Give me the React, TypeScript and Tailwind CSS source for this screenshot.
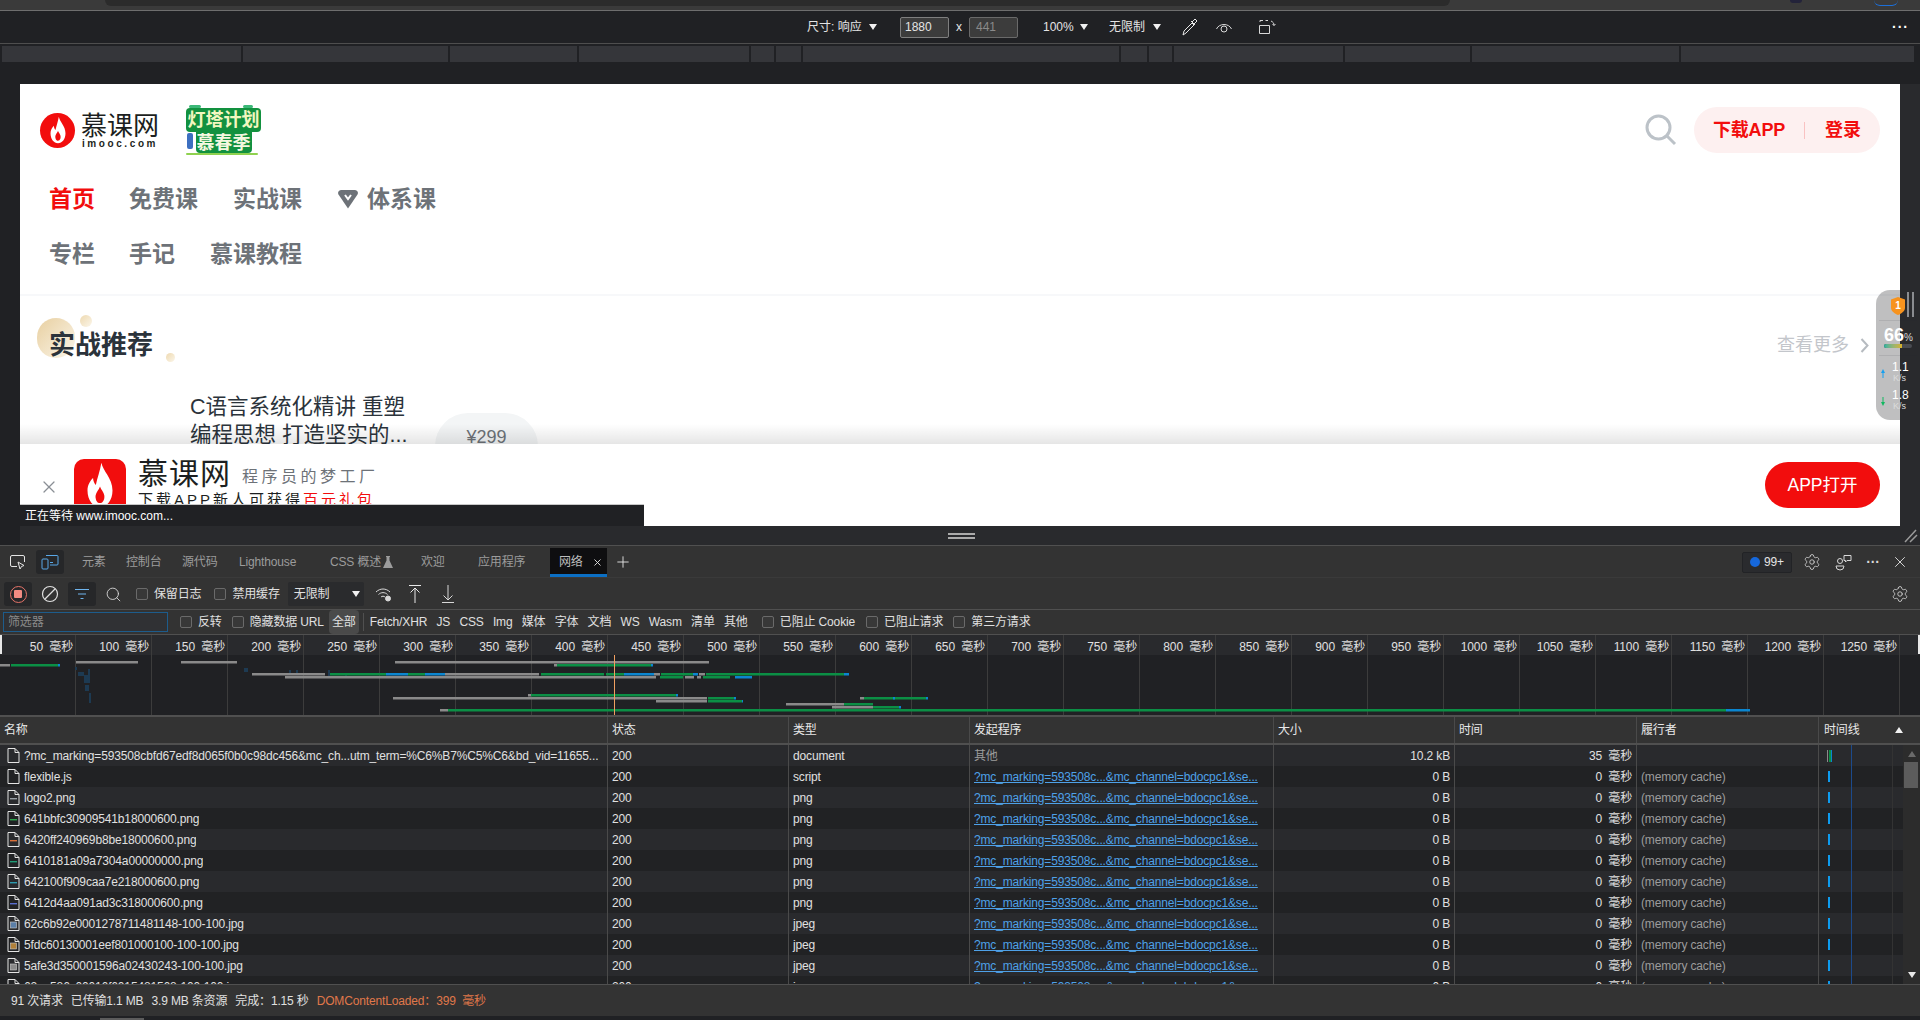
import { Plus, Search, Settings, X } from 'lucide-react';

const ticks = Array.from({ length: 25 }, (_, i) => (i + 1) * 50);

const GRAY = '#8a8a8a';
const GREEN = '#0b8f45';
const BLUE = '#0b86d0';

// y, x1, x2, colour
const bars: [number, number, number, string][] = [
    [9, 0, 10, GRAY], [9, 11, 58, GREEN], [9, 58, 60, BLUE],
    [6, 76, 138, GRAY], [6, 181, 237, GRAY], [6, 395, 709, GRAY],
    [9, 554, 557, GRAY], [9, 557, 651, GREEN], [9, 651, 653, BLUE],
    [18, 252, 325, GRAY], [18, 330, 386, GREEN], [18, 386, 408, BLUE], [18, 408, 425, GREEN],
    [18, 425, 445, BLUE], [18, 445, 539, GRAY], [18, 541, 604, GREEN], [18, 606, 624, GREEN],
    [18, 624, 654, BLUE], [18, 654, 660, GRAY], [18, 661, 693, GREEN], [18, 693, 698, BLUE],
    [18, 699, 705, GRAY], [18, 706, 844, GREEN], [18, 844, 849, BLUE],
    [21, 285, 656, GRAY], [21, 660, 683, GREEN], [21, 685, 694, GRAY], [21, 697, 701, GRAY],
    [21, 703, 730, GREEN], [21, 735, 752, BLUE],
    [39, 528, 531, GRAY], [39, 531, 676, GREEN], [39, 676, 678, BLUE],
    [42, 393, 707, GRAY], [42, 708, 734, GREEN], [42, 734, 736, BLUE],
    [42, 860, 864, GRAY], [42, 864, 926, GREEN], [42, 893, 895, BLUE], [42, 926, 928, BLUE],
    [45, 656, 707, GRAY], [45, 708, 742, GREEN], [45, 742, 743, BLUE],
    [48, 786, 844, GRAY], [48, 844, 873, GREEN],
    [51, 832, 873, GRAY], [51, 873, 899, GREEN], [51, 899, 901, BLUE],
    [54, 440, 448, GRAY], [54, 448, 1726, GREEN], [54, 1726, 1750, BLUE],
];

const specks: [number, number, number, number][] = [
    [75, 12, 2, 3], [78, 17, 6, 4], [84, 20, 4, 8], [88, 14, 2, 14], [85, 30, 4, 6], [89, 38, 2, 10],
    [244, 13, 4, 4], [289, 15, 2, 3], [296, 15, 2, 3], [328, 15, 2, 8], [345, 19, 2, 3],
];

type Row = { name: string; type: string; dash?: string; thumb?: string };

const rows: Row[] = [
    { name: '?mc_marking=593508cbfd67edf8d065f0b0c98dc456&mc_ch...utm_term=%C6%B7%C5%C6&bd_vid=11655...', type: 'document' },
    { name: 'flexible.js', type: 'script' },
    { name: 'logo2.png', type: 'png', dash: '#9aa0a6' },
    { name: '641bbfc30909541b18000600.png', type: 'png', dash: '#2fa84f' },
    { name: '6420ff240969b8be18000600.png', type: 'png', dash: '#d9703a' },
    { name: '6410181a09a7304a00000000.png', type: 'png', dash: '#1f9c76' },
    { name: '642100f909caa7e218000600.png', type: 'png', dash: '#2f9cb0' },
    { name: '6412d4aa091ad3c318000600.png', type: 'png', dash: '#5a6fd0' },
    { name: '62c6b92e0001278711481148-100-100.jpg', type: 'jpeg', thumb: '#5b7fa8' },
    { name: '5fdc60130001eef801000100-100-100.jpg', type: 'jpeg', thumb: '#b0803a' },
    { name: '5afe3d350001596a02430243-100-100.jpg', type: 'jpeg', thumb: '#8a8a8a' },
    { name: '62ae586c00016f6015481568-100-100.jpg', type: 'jpeg', thumb: '#7a8a9a' },
];

const Triangle = () => (
    <svg width="10" height="8" viewBox="0 0 10 8" className="shrink-0">
        <path d="M1 1h8L5 7z" fill="#f1f1f1" />
    </svg>
);

const Check = ({ label, className }: { label: string; className?: string }) => (
    <span className={`flex items-center gap-[6px] ${className ?? ''}`}>
        <span className="h-[12px] w-[12px] rounded-[2px] border border-[#6a6a6a] bg-[#383838]" />
        <span>{label}</span>
    </span>
);

const FileIcon = ({ dash, thumb }: { dash?: string; thumb?: string }) => (
    <svg width="13" height="17" viewBox="0 0 13 17" className="shrink-0">
        <path d="M1 1.500h7l4 4v10H1z" fill="none" stroke="#e4e4e4" strokeWidth="1" />
        <path d="M8 1.500v4h4" fill="none" stroke="#e4e4e4" strokeWidth="1" />
        {dash && <rect x="3" y="9" width="7" height="1.400" fill={dash} />}
        {thumb && <rect x="3.500" y="7" width="6" height="6" fill={thumb} stroke="#cfcfcf" strokeWidth="0.6" />}
    </svg>
);

const Flame = ({ size }: { size: number }) => (
    <svg width={size} height={size} viewBox="0 0 36 36">
        <path
            d="M19 2C20 8 27 13 27 22C27 29 23 34 18 34C13 34 9 29 9 22C9 18 11 15 13 13C13 15 14 17 15 18C16 13 18 8 19 2zM18 19C17 22 14 24 15 28C15.500 30.500 17 31 18 31C19 31 20.500 30 21 28C22 24 19 22 18 19z"
            fill="#fff"
            fillRule="evenodd"
        />
    </svg>
);

function TopChrome() {
    return (
        <>
            <div className="flex h-[10px] shrink-0 bg-[#3a3a3a]">
                <div className="ml-[105px] h-[6px] w-[1345px] rounded-b-[8px] bg-[#2b2b2b]" />
                <div className="ml-[340px] h-[3px] w-[12px] rounded-b-full bg-[#23233a]" />
                <div className="ml-[72px] h-[6px] w-[24px] rounded-b-[8px] border-b border-[#1c6fd8]" />
            </div>
            <div className="h-px shrink-0 bg-[#6e6e6e]" />
            <div className="flex h-[32px] shrink-0 items-center bg-[#202124] pl-[807px] text-[#e4e4e4]">
                <span className="w-[61px]">尺寸: 响应</span>
                <Triangle />
                <span className="ml-[22px] flex h-[21px] w-[49px] items-center rounded-[2px] border border-[#7f7f7f] bg-[#3c3c3c] pl-[4px]">1880</span>
                <span className="mx-[6px] w-[8px] text-center">x</span>
                <span className="flex h-[21px] w-[49px] items-center rounded-[2px] border border-[#6a6a6a] bg-[#3c3c3c] pl-[6px] text-[#8a8a8a]">441</span>
                <span className="ml-[25px] w-[36px]">100%</span>
                <Triangle />
                <span className="ml-[20px] w-[43px]">无限制</span>
                <Triangle />
                <svg width="18" height="20" viewBox="0 0 18 20" className="ml-[19px]" fill="none" stroke="#e8e8e8">
                    <path d="M2 18l1-4 8-8 2 2-8 8zM10 4l4 4M11 5l3-3 2 2-3 3" />
                </svg>
                <svg width="18" height="14" viewBox="0 0 18 14" className="ml-[16px]" fill="none" stroke="#d8d8d8">
                    <path d="M1.500 9C4 3 14 3 16.500 9" />
                    <circle cx="9" cy="9" r="3" />
                </svg>
                <svg width="18" height="16" viewBox="0 0 18 16" className="ml-[25px]" fill="none" stroke="#d8d8d8">
                    <path d="M1.500 6.500h10v8h-10zM2 3V1.500h3M7.500 1.500H10M13 2c2 1 3 2 3 4.500M14.500 5l1.500 1.500L17.500 5" />
                </svg>
                <span className="ml-[616px] text-[14px] font-bold leading-none tracking-[1px] text-white">···</span>
            </div>
            <div className="h-px shrink-0 bg-[#4e4e4e]" />
            <div className="h-[2px] shrink-0 bg-[#202124]" />
            <div className="flex h-[16px] shrink-0 bg-[#202124] px-[2px]">
                {[239, 205, 127, 170, 23, 25, 316, 26, 23, 169, 125, 207, 233].map((w, i) => (
                    <div key={i} className="mr-[2px] bg-[#35363a]" style={{ width: w }} />
                ))}
            </div>
        </>
    );
}

function WebPage() {
    const navText = 'text-[23px] font-bold leading-[46px] text-[#6d7278]';
    return (
        <div className="relative h-[442px] w-[1880px] overflow-hidden bg-white">
            <div className="flex h-[92px] items-center pl-[20px] pr-[20px]">
                <div className="flex h-[35px] w-[35px] items-center justify-center rounded-full bg-[#f20d0d]">
                    <Flame size={30} />
                </div>
                <div className="ml-[5px] flex w-[80px] flex-col items-center pt-[2px]">
                    <span className="text-[26px] leading-[26px] text-[#1c1f21]">慕课网</span>
                    <span className="text-[10px] font-bold leading-[10px] tracking-[2.600px] text-[#1c1f21]">imooc.com</span>
                </div>
                {/* campaign badge: two stepped green plates */}
                <div className="relative ml-[26px] flex h-[50px] w-[75px] flex-col items-center font-bold">
                    <span className="absolute left-[3px] top-0 h-[3px] w-[12px] rounded-full bg-[#3cb878]" />
                    <span className="absolute right-[8px] top-0 h-[3px] w-[10px] rounded-full bg-[#3cb878]" />
                    <div className="mt-[3px] flex h-[24px] w-[75px] items-center justify-center rounded-[4px] bg-[#12913f] text-[18px] leading-none text-[#f2f7c0]">
                        <span className="whitespace-nowrap">灯塔计划</span>
                    </div>
                    <div className="flex h-[21px] w-[56px] items-center justify-center rounded-b-[4px] bg-[#12913f] text-[18px] leading-none text-[#f4f8e0]">
                        <span className="whitespace-nowrap">慕春季</span>
                    </div>
                    <span className="absolute bottom-[6px] left-[1px] h-[16px] w-[6px] rounded-[2px] bg-[#3c6fc0]" />
                    <span className="absolute bottom-0 left-0 h-[2px] w-[72px] rounded-full bg-[#8fd14f]" />
                </div>
                <svg width="32" height="32" viewBox="0 0 32 32" fill="none" stroke="#bcc2c8" strokeWidth="3" className="ml-auto">
                    <circle cx="13.500" cy="13.500" r="11.500" />
                    <path d="M22 22l8 8" />
                </svg>
                <div className="ml-[17px] flex h-[46px] w-[186px] items-center rounded-full bg-[#fdf0f0] pl-[19px] text-[18px] font-bold text-[#f20d0d]">
                    <span className="w-[71px] whitespace-nowrap pt-[1px] tracking-[-0.2px]">下载APP</span>
                    <span className="ml-[20px] h-[17px] w-px bg-[#f9c2c2]" />
                    <span className="ml-[20px] pt-[1px]">登录</span>
                </div>
            </div>
            <div className="flex pl-[29px]">
                <span className="w-[80px] text-[23px] font-bold leading-[46px] text-[#f20d0d]">首页</span>
                <span className={`w-[104px] ${navText}`}>免费课</span>
                <span className={`w-[105px] ${navText}`}>实战课</span>
                <span className={`flex items-center gap-[9px] ${navText}`}>
                    <svg width="20" height="20" viewBox="0 0 20 20">
                        <path d="M3 1h14a3 3 0 0 1 2.500 4.500L10 19.500 .5 5.500A3 3 0 0 1 3 1z" fill="#6d7278" />
                        <path d="M7 6l3 4 3-4" fill="none" stroke="#fff" strokeWidth="2" />
                    </svg>
                    体系课
                </span>
            </div>
            <div className="mt-[9px] flex pl-[29px]">
                <span className={`w-[80px] ${navText}`}>专栏</span>
                <span className={`w-[81px] ${navText}`}>手记</span>
                <span className={navText}>慕课教程</span>
            </div>
            <div className="mt-[17px] h-[2px] bg-[#f7f8fa]" />
            <div className="relative mt-[19px] flex h-[60px] items-center pl-[29px] pr-[30px]">
                <span className="absolute left-[17px] top-[3px] h-[40px] w-[38px] rounded-full bg-gradient-to-br from-[#e8cfa0] to-[#fbf6ea]" />
                <span className="absolute left-[60px] top-0 h-[12px] w-[12px] rounded-full bg-gradient-to-br from-[#eed9b0] to-[#fbf6ea]" />
                <span className="absolute left-[146px] top-[38px] h-[9px] w-[9px] rounded-full bg-gradient-to-br from-[#eed9b0] to-[#fbf6ea]" />
                <span className="relative text-[26px] font-bold text-[#2b333b]">实战推荐</span>
                <span className="ml-auto text-[18px] text-[#c3c6cb]">查看更多</span>
                <svg width="10" height="15" viewBox="0 0 10 15" fill="none" stroke="#b6bbc0" strokeWidth="2" className="ml-[11px]">
                    <path d="M1.500 1l6 6.500-6 6.500" />
                </svg>
            </div>
            <div className="mt-[18px] flex pl-[170px]">
                <div className="w-[225px] text-[21.500px] leading-[28px] text-[#2b333b]">
                    <div className="whitespace-nowrap">C语言系统化精讲 重塑</div>
                    <div className="whitespace-nowrap">编程思想 打造坚实的...</div>
                </div>
                <div className="ml-[20px] mt-[20px] flex h-[67px] w-[103px] justify-center rounded-[33px] bg-[#f3f5f6] pt-[11px] text-[18px] leading-[26px] text-[#6d7278]">¥299</div>
            </div>
            {/* app download banner pinned to the bottom of the viewport */}
            <div className="absolute inset-x-0 bottom-0 h-[82px] bg-white pl-[54px] pt-[15px]">
                <div className="absolute inset-x-0 -top-[20px] h-[20px] bg-gradient-to-b from-black/0 to-black/10" />
                <div className="flex">
                    <X size={20} strokeWidth={1.5} className="absolute left-[19px] top-[33px] text-[#8a8f95]" />
                    <div className="flex h-[60px] w-[52px] shrink-0 items-start justify-center rounded-[10px] bg-[#f20d0d] pt-[1px]">
                        <Flame size={50} />
                    </div>
                    <div className="ml-[12px]">
                        <div className="flex items-end">
                            <span className="text-[30px] leading-[30px] tracking-[1px] text-[#1c1f21]">慕课网</span>
                            <span className="ml-[11px] text-[16px] leading-[24px] tracking-[3.500px] text-[#6d7278]">程序员的梦工厂</span>
                        </div>
                        <div className="mt-[1px] whitespace-nowrap text-[15px] leading-[20px] tracking-[3px] text-[#1c1f21]">
                            下载APP新人可获得<span className="text-[#f20d0d]">百元礼包</span>
                        </div>
                    </div>
                    <div className="absolute right-[20px] top-[18px] flex h-[46px] w-[115px] items-center justify-center rounded-full bg-[#f20d0d] text-[17.500px] text-white">APP打开</div>
                </div>
            </div>
            <div className="absolute bottom-0 left-0 flex h-[22px] w-[624px] items-center border-t border-[#c8c8c8] bg-[#202124] pl-[5px] text-[12px] text-white">
                正在等待 www.imooc.com...
            </div>
        </div>
    );
}

function SpeedWidget() {
    return (
        <div className="absolute right-0 top-[228px] h-[130px] w-[44px] rounded-l-[14px] bg-[#2b2c30]/30 text-white">
            <svg width="14" height="18" viewBox="0 0 14 18" className="absolute left-[15px] top-[7px]">
                <path d="M7 0l7 2.500V11c0 3-3.500 5.500-7 7-3.500-1.500-7-4-7-7V2.500z" fill="#f7931e" />
                <text x="7" y="12" textAnchor="middle" fontSize="10" fontWeight="700" fill="#fff">1</text>
            </svg>
            <span className="absolute left-[31px] top-[2px] h-[25px] w-[2px] bg-[#8a8c90]" />
            <span className="absolute left-[36px] top-[2px] h-[25px] w-[2px] bg-[#8a8c90]" />
            <span className="absolute inset-x-[3px] top-[30px] h-px bg-[#2b2c30]/10" />
            <div className="absolute left-[8px] top-[35px] text-[18px] font-bold leading-[20px]">
                66<span className="text-[10px] font-normal text-[#d8d8d8]">%</span>
            </div>
            <div className="absolute left-[8px] top-[54px] h-[4px] w-[28px] overflow-hidden rounded-full bg-[#4a4c52]">
                <div className="h-full w-[18px] bg-gradient-to-r from-[#20b2a0] to-[#d8b020]" />
            </div>
            <span className="absolute inset-x-[3px] top-[65px] h-px bg-[#2b2c30]/10" />
            <svg width="4" height="9" viewBox="0 0 4 9" className="absolute left-[5px] top-[79px]">
                <path d="M2 0l2 4H2.500v5h-1V4H0z" fill="#16a0f0" />
            </svg>
            <div className="absolute left-[16px] top-[71px] text-[12px] leading-[12px]">1.1</div>
            <div className="absolute left-[17px] top-[83px] text-[9px] leading-[10px] text-[#dcdcdc]">K/s</div>
            <svg width="4" height="9" viewBox="0 0 4 9" className="absolute left-[5px] top-[107px]">
                <path d="M2 9l2-4H2.500V0h-1v5H0z" fill="#12b860" />
            </svg>
            <div className="absolute left-[16px] top-[99px] text-[12px] leading-[12px]">1.8</div>
            <div className="absolute left-[17px] top-[111px] text-[9px] leading-[10px] text-[#dcdcdc]">K/s</div>
        </div>
    );
}

function TabsRow() {
    const tab = 'text-[#9c9c9c] whitespace-nowrap';
    return (
        <div className="flex h-[32px] shrink-0 items-center border-b border-[#3a3a3a] bg-[#333333] pt-[1px]">
            <svg width="18" height="18" viewBox="0 0 18 18" className="ml-[9px]" fill="none" stroke="#e4e4e4">
                <path d="M8 13.500H3A1.500 1.500 0 0 1 1.500 12V4A1.500 1.500 0 0 1 3 2.500h11A1.500 1.500 0 0 1 15.500 4v5" />
                <path d="M9 9l2 7 1.500-2.500 2.500-1z" />
            </svg>
            <span className="ml-[9px] flex h-[24px] w-[28px] items-center justify-center rounded-[3px] bg-[#262729]">
                <svg width="18" height="16" viewBox="0 0 18 16" fill="none" stroke="#59a8e8">
                    <rect x="1" y="5" width="6" height="10" rx="1" />
                    <path d="M5 1.500h11a1 1 0 0 1 1 1V10a1 1 0 0 1-1 1H9M9 8.500h3" />
                </svg>
            </span>
            <span className={`ml-[18px] w-[44px] ${tab}`}>元素</span>
            <span className={`w-[56px] ${tab}`}>控制台</span>
            <span className={`w-[57px] ${tab}`}>源代码</span>
            <span className={`w-[91px] ${tab}`}>Lighthouse</span>
            <span className={`w-[53px] ${tab}`}>CSS 概述</span>
            <svg width="10" height="12" viewBox="0 0 10 12"><path d="M3 0h4v1H6.500v3.500L10 12H0l3.500-7.500V1H3z" fill="#9c9c9c" /></svg>
            <span className={`ml-[28px] w-[57px] ${tab}`}>欢迎</span>
            <span className={`w-[72px] ${tab}`}>应用程序</span>
            <div className="mt-[1px] flex h-[29px] w-[57px] items-center self-start border-b-[3px] border-[#0b6fc4] bg-[#0e0e10] pl-[9px] pt-[2px] text-[#bdbdbd]">
                网络
                <X size={11} strokeWidth={2} className="ml-[9px] text-[#e4e4e4]" />
            </div>
            <Plus size={18} strokeWidth={1.2} className="ml-[7px] text-[#e8e8e8]" />
            <div className="ml-auto flex h-[21px] w-[50px] items-center justify-center gap-[4px] rounded-[2px] border border-[#222326] bg-[#2a2b2e] text-[#e4e4e4]">
                <span className="h-[10px] w-[10px] rounded-full bg-[#1668dc]" />
                99+
            </div>
            <Settings size={18} strokeWidth={1.1} className="ml-[11px] text-[#d8d8d8]" />
            <svg width="17" height="17" viewBox="0 0 17 17" className="ml-[14px]" fill="none" stroke="#d8d8d8">
                <circle cx="5" cy="7" r="2.500" />
                <path d="M1 12h8a4 4 0 0 1-8 0zM9 1.500h7v5h-4l-1.500 1.500V6.500H9z" />
            </svg>
            <span className="ml-[13px] w-[16px] text-center text-[14px] font-bold leading-none text-[#d8d8d8]">···</span>
            <X size={18} strokeWidth={1.2} className="ml-[10px] mr-[11px] text-[#e4e4e4]" />
        </div>
    );
}

function ActionsRow() {
    return (
        <div className="flex h-[32px] shrink-0 items-center border-b border-[#505050] bg-[#333333] pt-[1px] text-[#e0e0e0]">
            <span className="ml-[4px] flex h-[24px] w-[28px] items-center justify-center rounded-[3px] bg-[#262729]">
                <span className="flex h-[17px] w-[17px] items-center justify-center rounded-full border border-[#e57368]">
                    <span className="h-[8px] w-[8px] rounded-[1px] bg-[#f28b82]" />
                </span>
            </span>
            <svg width="18" height="18" viewBox="0 0 18 18" className="ml-[9px]" fill="none" stroke="#e0e0e0" strokeWidth="1.200">
                <circle cx="9" cy="9" r="7.500" />
                <path d="M4 14L14 4" />
            </svg>
            <span className="ml-[9px] flex h-[24px] w-[28px] items-center justify-center rounded-[3px] bg-[#262729]">
                <svg width="14" height="12" viewBox="0 0 14 12" stroke="#6fb5ee">
                    <path d="M0 1.500h14M3 6h8M5.500 10.500h3" />
                </svg>
            </span>
            <Search size={17} strokeWidth={1.2} className="ml-[9px] text-[#e0e0e0]" />
            <Check label="保留日志" className="ml-[14px]" />
            <Check label="禁用缓存" className="ml-[13px]" />
            <div className="ml-[8px] flex h-[24px] w-[76px] items-center justify-between rounded-[2px] bg-[#2a2b2d] pl-[6px] pr-[3px]">
                无限制
                <Triangle />
            </div>
            <svg width="18" height="18" viewBox="0 0 18 18" className="ml-[11px]" fill="none" stroke="#d8d8d8">
                <path d="M1 7c4-4 10-4 14 0M3.500 9.500c2.500-2.500 6.500-2.500 9 0M6 12c1-1 3-1 4 0" />
                <circle cx="13" cy="13.500" r="2.500" fill="#d8d8d8" />
            </svg>
            <svg width="14" height="20" viewBox="0 0 14 20" className="ml-[15px]" fill="none" stroke="#e8e8e8">
                <path d="M1 1.500h12M7 19V4M2.500 8.500L7 4l4.500 4.500" />
            </svg>
            <svg width="14" height="20" viewBox="0 0 14 20" className="ml-[19px]" fill="none" stroke="#d8d8d8">
                <path d="M1 18.500h12M7 1v15M2.500 11.500L7 16l4.500-4.500" />
            </svg>
            <Settings size={18} strokeWidth={1.1} className="ml-auto mr-[11px] text-[#d8d8d8]" />
        </div>
    );
}

function FilterRow() {
    return (
        <div className="flex h-[25px] shrink-0 items-center whitespace-nowrap border-b border-[#505050] bg-[#333333] text-[#e0e0e0]">
            <div className="ml-[3px] flex h-[20px] w-[165px] items-center border border-[#1d5c8c] bg-[#303134] pl-[4px] text-[#8a8a8a]">筛选器</div>
            <Check label="反转" className="ml-[12px]" />
            <Check label="隐藏数据 URL" className="ml-[10px]" />
            <span className="ml-[5px] flex h-[24px] w-[30px] items-center justify-center rounded-[4px] bg-[#4a4a4a]">全部</span>
            <span className="ml-[4px] h-[18px] w-px bg-[#505050]" />
            <div className="ml-[6px] flex w-[378px] justify-between">
                {['Fetch/XHR', 'JS', 'CSS', 'Img', '媒体', '字体', '文档', 'WS', 'Wasm', '清单', '其他'].map((t) => (
                    <span key={t}>{t}</span>
                ))}
            </div>
            <Check label="已阻止 Cookie" className="ml-[14px]" />
            <Check label="已阻止请求" className="ml-[11px]" />
            <Check label="第三方请求" className="ml-[10px]" />
        </div>
    );
}

function Overview() {
    return (
        <div className="relative h-[82px] shrink-0 border-b-2 border-[#505050] bg-[#202124]">
            <span className="absolute left-0 top-0 h-[19px] w-[2px] bg-[#e8e8e8]" />
            <span className="absolute right-0 top-0 h-[19px] w-[2px] bg-[#e8e8e8]" />
            <div className="flex h-[20px] bg-[#292a2d] text-[#e0e0e0]">
                {ticks.map((t) => (
                    <div key={t} className="flex w-[76px] shrink-0 items-center justify-end whitespace-pre border-r border-[#3c3c3c] pr-[2px] pt-[3px]">
                        {t}{'  '}毫秒
                    </div>
                ))}
            </div>
            <svg width="1920" height="60" viewBox="0 0 1920 60" className="block">
                {ticks.map((t) => (
                    <rect key={t} x={(t / 50) * 76 - 1} y="0" width="1" height="60" fill="#3c3c3c" />
                ))}
                {specks.map(([x, y, w, h], i) => (
                    <rect key={i} x={x} y={y} width={w} height={h} fill="#1d3a52" />
                ))}
                {bars.map(([y, a, b, c], i) => (
                    <rect key={i} x={a} y={y} width={b - a} height={2.5} fill={c} />
                ))}
                <rect x="614" y="0" width="1" height="60" fill="#f0a060" />
            </svg>
        </div>
    );
}

const cols = 'grid grid-cols-[608px_181px_181px_304px_181px_182px_182px_101px]';

function Table() {
    const head = 'flex items-center border-r border-[#4a4a4a] pl-[4px]';
    return (
        <>
            <div className={`${cols} h-[28px] shrink-0 border-b-2 border-[#505050] bg-[#333333] text-[#e8e8e8]`}>
                <div className={head}>名称</div>
                <div className={head}>状态</div>
                <div className={head}>类型</div>
                <div className={head}>发起程序</div>
                <div className={head}>大小</div>
                <div className={head}>时间</div>
                <div className={head}>履行者</div>
                <div className="flex items-center pl-[5px]">
                    时间线
                    <svg width="10" height="8" viewBox="0 0 10 8" className="ml-[34px]"><path d="M5 1l4 6H1z" fill="#f1f1f1" /></svg>
                </div>
            </div>
            <div className="relative h-[239px] shrink-0 overflow-hidden bg-[#202124]">
                {rows.map((r, i) => {
                    const cell = 'flex h-[21px] items-center border-r border-[#4a4a4a] px-[4px] whitespace-nowrap overflow-hidden';
                    return (
                        <div key={r.name} className={`${cols} ${i % 2 === 0 ? 'bg-[#292a2d]' : 'bg-[#212224]'} text-[#e0e0e0]`}>
                            <div className={`${cell} pl-[7px]`}>
                                <FileIcon dash={r.dash} thumb={r.thumb} />
                                <span className="ml-[4px] truncate">{r.name}</span>
                            </div>
                            <div className={cell}>200</div>
                            <div className={cell}>{r.type}</div>
                            {i === 0 ? (
                                <div className={`${cell} text-[#9c9c9c]`}>其他</div>
                            ) : (
                                <div className={cell}>
                                    <span className="truncate text-[#4ea1e8] underline">?mc_marking=593508c...&amp;mc_channel=bdocpc1&amp;se...</span>
                                </div>
                            )}
                            <div className={`${cell} justify-end`}>{i === 0 ? '10.2 kB' : '0 B'}</div>
                            <div className={`${cell} justify-end whitespace-pre`}>{i === 0 ? '35  毫秒' : '0  毫秒'}</div>
                            <div className={`${cell} text-[#9c9c9c]`}>{i === 0 ? '' : '(memory cache)'}</div>
                            <div className="flex h-[21px] items-center pl-[8px]">
                                {i === 0 ? (
                                    <span className="flex h-[12px]">
                                        <span className="w-px bg-[#8a8a8a]" />
                                        <span className="ml-px w-[2px] bg-[#0b8f45]" />
                                        <span className="w-px bg-[#0b86d0]" />
                                    </span>
                                ) : (
                                    <span className="ml-[1px] h-[11px] w-[2px] bg-[#0d9cf0]" />
                                )}
                            </div>
                        </div>
                    );
                })}
                <span className="absolute bottom-0 left-[1851px] top-0 w-px bg-[#1c4a8c]" />
                <span className="absolute bottom-0 left-[1892px] top-0 w-px bg-[#333333]" />
                {/* scrollbar */}
                <div className="absolute bottom-0 right-0 top-0 flex w-[17px] flex-col items-center justify-between bg-[#2c2c2c] py-[6px]">
                    <svg width="8" height="6" viewBox="0 0 8 6"><path d="M4 0l4 6H0z" fill="#6a6a6a" /></svg>
                    <span className="absolute left-[1px] top-[17px] h-[26px] w-[14px] bg-[#5c5c5c]" />
                    <svg width="8" height="6" viewBox="0 0 8 6"><path d="M4 6L0 0h8z" fill="#e8e8e8" /></svg>
                </div>
            </div>
        </>
    );
}

function StatusBar() {
    return (
        <div className="flex h-[32px] shrink-0 items-center gap-[8px] whitespace-pre border-t border-[#505050] bg-[#333333] pl-[11px] text-[#e0e0e0]">
            <span>91 次请求</span>
            <span>已传输1.1 MB</span>
            <span>3.9 MB 条资源</span>
            <span>完成：1.15 秒</span>
            <span className="text-[#e0784a]">DOMContentLoaded：399  毫秒</span>
        </div>
    );
}

export default function App() {
    return (
        <div className="flex h-[1020px] w-[1920px] flex-col overflow-hidden bg-[#202124] text-[12px] [font-family:'Liberation_Sans','Noto_Sans_CJK_SC',sans-serif]">
            <TopChrome />
            <div className="relative flex shrink-0">
                <div className="w-[20px] shrink-0 bg-[#202124]" />
                <div className="flex-1">
                    <div className="h-[22px] bg-[#202124]" />
                    <div className="flex">
                        <WebPage />
                        <div className="flex-1 bg-[#292a2d]" />
                    </div>
                    <div className="relative flex h-[19px] items-center justify-center bg-[#292a2d] pr-[17px]">
                        <div className="flex w-[27px] flex-col gap-[2px]">
                            <span className="h-[2px] bg-[#ababab]" />
                            <span className="h-[2px] bg-[#ababab]" />
                        </div>
                        <svg width="14" height="14" viewBox="0 0 14 14" className="absolute right-[2px] top-[3px]" stroke="#9a9a9a" strokeWidth="1.500">
                            <path d="M1 13L12 1M6 13L13 6" />
                        </svg>
                    </div>
                </div>
                <SpeedWidget />
            </div>
            <div className="h-px shrink-0 bg-[#505050]" />
            <div className="flex flex-1 flex-col tracking-[-0.15px]">
                <TabsRow />
                <ActionsRow />
                <FilterRow />
                <Overview />
                <Table />
                <StatusBar />
                <div className="flex flex-1 items-end bg-[#202124]">
                    <span className="ml-[100px] h-[2px] w-[44px] bg-[#5c5c5c]" />
                </div>
            </div>
        </div>
    );
}
